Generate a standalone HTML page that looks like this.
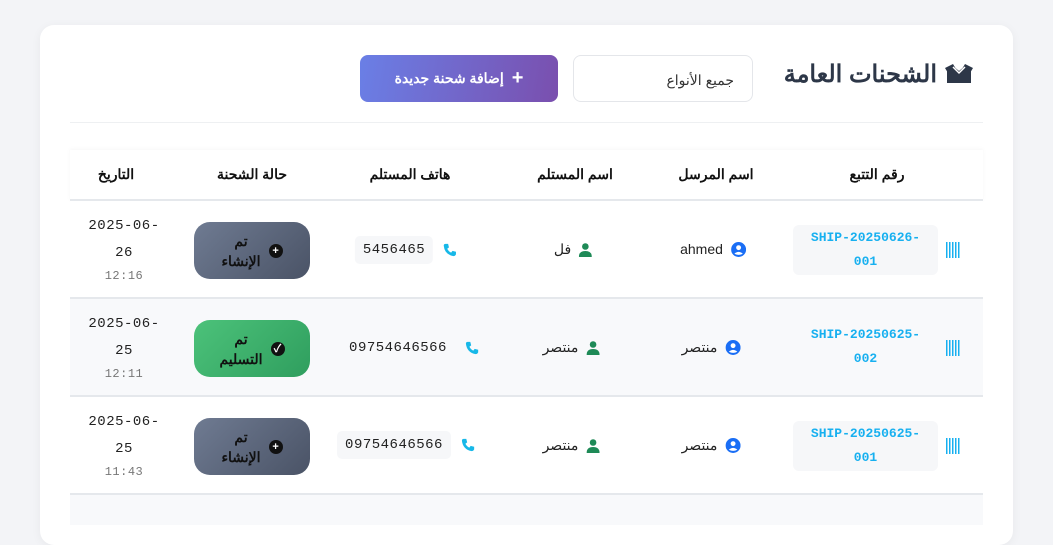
<!DOCTYPE html>
<html><head><meta charset="utf-8">
<style>
*{margin:0;padding:0;box-sizing:border-box}
body{width:1053px;height:514px;background:#f3f4f7;font-family:"Liberation Sans","Noto Sans CJK SC",sans-serif;position:relative;overflow:hidden}
.card{position:absolute;left:40px;top:25px;width:973px;height:520px;background:#fff;border-radius:14px;box-shadow:0 2px 10px rgba(0,0,0,.05)}
.a{position:absolute}
.c{position:absolute;display:flex;align-items:center;justify-content:center;transform:translateX(-50%);white-space:nowrap}
.hd{font-weight:bold;font-size:14px;color:#111}
.row{position:absolute;left:70px;width:913px;border-bottom:2px solid #e5e8ec}
.trk{background:#f6f7f9;border-radius:6px;width:145px;height:50px;color:#17b0f0;font-family:"Liberation Mono",monospace;font-weight:bold;font-size:13px;line-height:24px;text-align:center;padding-top:1px}
.badge{width:116px;height:57px;border-radius:16px;display:flex;align-items:center;justify-content:center;gap:8px;font-weight:bold;font-size:14px;color:#111;text-align:center;line-height:20px}
.gray{background:linear-gradient(135deg,#6f7b92,#4a5366)}
.green{background:linear-gradient(135deg,#4cc27a,#2f9e5e)}
.dot{width:14px;height:14px;border-radius:50%;background:#111;color:#fff;font-size:11px;line-height:14px;text-align:center}
.ph{background:#f6f7f9;border-radius:5px;padding:6px 8px;font-family:"Liberation Mono",monospace;font-size:14px;color:#222;letter-spacing:.5px}
.name{font-size:14px;color:#222;display:flex;align-items:center;gap:8px}
.date{font-family:"Liberation Mono",monospace;font-size:14px;color:#222;text-align:center;line-height:27px;letter-spacing:.5px}
.date small{display:block;font-size:12px;color:#777;line-height:18px}
</style></head><body>
<div class="card"></div>
<div class="a" style="right:78px;top:60px;font-size:24px;font-weight:bold;color:#2d3748;display:flex;align-items:center;gap:6px">
<span>الشحنات العامة</span>
<svg width="32" height="24" viewBox="0 0 32 24"><path d="M4 8 L10 3 L16 8 L22 3 L28 8 L28 20 L4 20 Z" fill="#2d3748"/><path d="M2 5 L10 1 L13 6 L5 10Z M30 5 L22 1 L19 6 L27 10Z" fill="#2d3748"/><path d="M10 4 L16 10 L22 4" stroke="#fff" stroke-width="1.5" fill="none"/></svg>
</div>
<div class="a" style="left:573px;top:55px;width:180px;height:47px;border:1px solid #e4e6ea;border-radius:8px;font-size:14px;color:#333;direction:rtl;padding:16px 18px 0 0">جميع الأنواع</div>
<div class="a" style="left:360px;top:55px;width:198px;height:47px;border-radius:8px;background:linear-gradient(100deg,#6a7fe6,#7a4fae);color:#fff;font-weight:bold;font-size:14px;display:flex;align-items:center;justify-content:center;gap:8px;direction:rtl"><span style="font-size:20px;font-weight:bold">+</span>إضافة شحنة جديدة</div>
<div class="a" style="left:70px;top:122px;width:913px;height:1px;background:#eef0f2"></div>
<div class="row" style="top:150px;height:51px;box-shadow:0 -1px 4px rgba(0,0,0,.04)"></div>
<div class="c hd" style="left:877px;top:166px">رقم التتبع</div>
<div class="c hd" style="left:716px;top:166px">اسم المرسل</div>
<div class="c hd" style="left:575px;top:166px">اسم المستلم</div>
<div class="c hd" style="left:410px;top:166px">هاتف المستلم</div>
<div class="c hd" style="left:252px;top:166px">حالة الشحنة</div>
<div class="c hd" style="left:116px;top:166px">التاريخ</div>

<div class="row" style="top:201px;height:98px;background:#fff"></div>
<div class="row" style="top:299px;height:98px;background:#f8f9fb"></div>
<div class="row" style="top:397px;height:98px;background:#fff"></div>

<div class="a trk" style="left:793px;top:225px">SHIP-20250626-<br>001</div>
<div class="a" style="left:946px;top:242px;width:14px;height:16px;background:repeating-linear-gradient(90deg,#17b0f0 0 1.5px,transparent 1.5px 3px)"></div>
<div class="c name" style="left:713px;top:241px">ahmed <svg width="15" height="15" viewBox="0 0 16 16"><circle cx="8" cy="8" r="8" fill="#1a6ef5"/><circle cx="8" cy="6" r="2.6" fill="#fff"/><path d="M3.5 12.5 Q8 8.5 12.5 12.5 Q8 15 3.5 12.5Z" fill="#fff"/></svg></div>
<div class="c name" style="left:573px;top:241px">فل <svg width="13" height="14" viewBox="0 0 13 14"><circle cx="6.5" cy="3.5" r="3.3" fill="#1e8a57"/><path d="M0 14 Q0 8 6.5 8 Q13 8 13 14Z" fill="#1e8a57"/></svg></div>
<div class="c" style="left:406px;top:236px;gap:10px"><span class="ph">5456465</span><svg width="14" height="14" viewBox="0 0 16 16"><path d="M3 1 L6 1 L7 5 L5 6.5 Q6.5 9.5 9.5 11 L11 9 L15 10 L15 13 Q14 15 12 15 Q2 13 1 3 Q1 1 3 1Z" fill="#17b8e8"/></svg></div>
<div class="a badge gray" style="left:194px;top:222px"><span>تم<br>الإنشاء</span><span class="dot">+</span></div>
<div class="a date" style="left:80px;top:213px;width:88px">2025-06-<br>26<small>12:16</small></div>

<div class="a" style="left:793px;top:323px;width:145px;color:#17b0f0;font-family:'Liberation Mono',monospace;font-weight:bold;font-size:13px;line-height:24px;text-align:center">SHIP-20250625-<br>002</div>
<div class="a" style="left:946px;top:340px;width:14px;height:16px;background:repeating-linear-gradient(90deg,#17b0f0 0 1.5px,transparent 1.5px 3px)"></div>
<div class="c name" style="left:711px;top:339px">منتصر <svg width="15" height="15" viewBox="0 0 16 16"><circle cx="8" cy="8" r="8" fill="#1a6ef5"/><circle cx="8" cy="6" r="2.6" fill="#fff"/><path d="M3.5 12.5 Q8 8.5 12.5 12.5 Q8 15 3.5 12.5Z" fill="#fff"/></svg></div>
<div class="c name" style="left:571px;top:339px">منتصر <svg width="13" height="14" viewBox="0 0 13 14"><circle cx="6.5" cy="3.5" r="3.3" fill="#1e8a57"/><path d="M0 14 Q0 8 6.5 8 Q13 8 13 14Z" fill="#1e8a57"/></svg></div>
<div class="c" style="left:410px;top:334px;gap:10px"><span class="ph" style="background:none">09754646566</span><svg width="14" height="14" viewBox="0 0 16 16"><path d="M3 1 L6 1 L7 5 L5 6.5 Q6.5 9.5 9.5 11 L11 9 L15 10 L15 13 Q14 15 12 15 Q2 13 1 3 Q1 1 3 1Z" fill="#17b8e8"/></svg></div>
<div class="a badge green" style="left:194px;top:320px"><span>تم<br>التسليم</span><span class="dot">✓</span></div>
<div class="a date" style="left:80px;top:311px;width:88px">2025-06-<br>25<small>12:11</small></div>

<div class="a trk" style="left:793px;top:421px">SHIP-20250625-<br>001</div>
<div class="a" style="left:946px;top:438px;width:14px;height:16px;background:repeating-linear-gradient(90deg,#17b0f0 0 1.5px,transparent 1.5px 3px)"></div>
<div class="c name" style="left:711px;top:437px">منتصر <svg width="15" height="15" viewBox="0 0 16 16"><circle cx="8" cy="8" r="8" fill="#1a6ef5"/><circle cx="8" cy="6" r="2.6" fill="#fff"/><path d="M3.5 12.5 Q8 8.5 12.5 12.5 Q8 15 3.5 12.5Z" fill="#fff"/></svg></div>
<div class="c name" style="left:571px;top:437px">منتصر <svg width="13" height="14" viewBox="0 0 13 14"><circle cx="6.5" cy="3.5" r="3.3" fill="#1e8a57"/><path d="M0 14 Q0 8 6.5 8 Q13 8 13 14Z" fill="#1e8a57"/></svg></div>
<div class="c" style="left:406px;top:431px;gap:10px"><span class="ph">09754646566</span><svg width="14" height="14" viewBox="0 0 16 16"><path d="M3 1 L6 1 L7 5 L5 6.5 Q6.5 9.5 9.5 11 L11 9 L15 10 L15 13 Q14 15 12 15 Q2 13 1 3 Q1 1 3 1Z" fill="#17b8e8"/></svg></div>
<div class="a badge gray" style="left:194px;top:418px"><span>تم<br>الإنشاء</span><span class="dot">+</span></div>
<div class="a date" style="left:80px;top:409px;width:88px">2025-06-<br>25<small>11:43</small></div>

<div class="row" style="top:495px;height:30px;background:#f8f9fb;border:none"></div>
</body></html>
